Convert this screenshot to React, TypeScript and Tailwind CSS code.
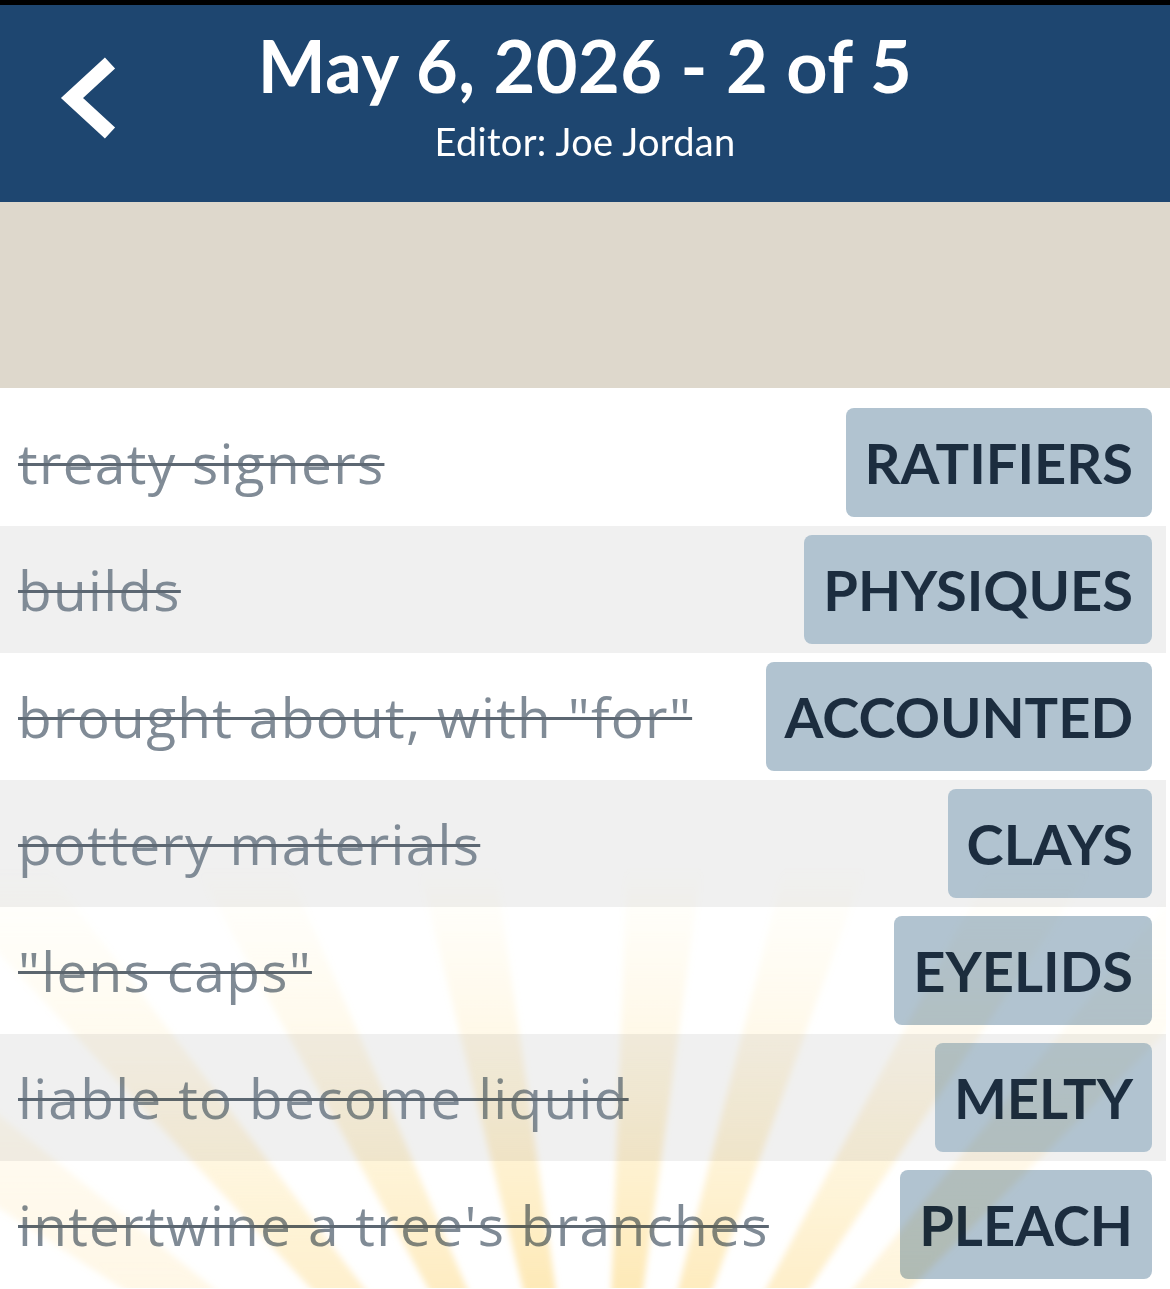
import React from 'react';

type Entry = { clue: string; answer: string };

const entries: Entry[] = [
  { clue: 'treaty signers', answer: 'RATIFIERS' },
  { clue: 'builds', answer: 'PHYSIQUES' },
  { clue: 'brought about, with "for"', answer: 'ACCOUNTED' },
  { clue: 'pottery materials', answer: 'CLAYS' },
  { clue: '"lens caps"', answer: 'EYELIDS' },
  { clue: 'liable to become liquid', answer: 'MELTY' },
  { clue: "intertwine a tree's branches", answer: 'PLEACH' },
];

// sun rays fanning out from below the list: [angle from vertical, strength]
const rays: [number, number][] = [
  [-54, 0.35],
  [-40, 0.7],
  [-26, 0.85],
  [-11, 1],
  [5, 1],
  [17, 0.9],
  [31, 0.75],
  [42, 0.5],
];

function Sunburst() {
  const cx = 600;
  const cy = 1212;
  const len = 1600;
  const half = 2.9;
  return (
    <svg className="pointer-events-none absolute inset-0 h-full w-full mix-blend-multiply" viewBox="0 0 1166 900" preserveAspectRatio="none">
      <defs>
        <linearGradient id="rayFade" gradientUnits="userSpaceOnUse" x1="0" y1="480" x2="0" y2="900">
          <stop offset="0" stopColor="#fde7a8" stopOpacity="0" />
          <stop offset="0.45" stopColor="#fde7a8" stopOpacity="0.3" />
          <stop offset="1" stopColor="#fde2a0" stopOpacity="0.75" />
        </linearGradient>
        <filter id="raySoft" x="-10%" y="-10%" width="120%" height="120%">
          <feGaussianBlur stdDeviation="3" />
        </filter>
      </defs>
      <g filter="url(#raySoft)">
        {rays.map(([a, k]) => {
          const r1 = ((a - half) * Math.PI) / 180;
          const r2 = ((a + half) * Math.PI) / 180;
          const p1 = `${cx + Math.sin(r1) * len},${cy - Math.cos(r1) * len}`;
          const p2 = `${cx + Math.sin(r2) * len},${cy - Math.cos(r2) * len}`;
          return <polygon key={a} points={`${cx},${cy} ${p1} ${p2}`} fill="url(#rayFade)" opacity={k} />;
        })}
      </g>
    </svg>
  );
}

export default function App() {
  return (
    <div className="min-h-[1289px] bg-white font-['Lato','Open_Sans',sans-serif]">
      <header className="border-t-[5px] border-black bg-[#1e4670]">
        <div className="relative flex h-[197px] flex-col items-center text-white">
          <button className="absolute left-[58px] top-[48px] h-[90px] w-[64px]" aria-label="Back">
            <svg viewBox="0 0 64 90" className="h-full w-full">
              <polyline points="52,10 14,45 52,80" fill="none" stroke="white" strokeWidth="15" strokeLinejoin="miter" />
            </svg>
          </button>
          <h1 className="mt-[17px] text-[72px] font-bold leading-[86px] tracking-[0.5px]">May 6, 2026 - 2 of 5</h1>
          <p className="mt-[10px] text-[38px] leading-[46px] tracking-[0.3px]">Editor: Joe Jordan</p>
        </div>
      </header>

      <div className="h-[186px] bg-[#ded8cc]" />

      <div className="relative mr-[4px] pt-[11px]">
        {entries.map((e, i) => (
          <div
            key={e.answer}
            className={`flex h-[127px] items-center justify-between pl-[18px] pr-[14px] ${i % 2 === 1 ? 'bg-[#f0f0f0]' : 'bg-white'}`}
          >
            <span className="font-['Open_Sans',sans-serif] text-[55px] leading-none tracking-[1.3px] text-[#808b96] line-through decoration-[#5c6772] decoration-[3px]">
              {e.clue}
            </span>
            <span className="flex h-[109px] items-center rounded-[8px] bg-[#b1c3d0] px-[19px] text-[56px] font-bold leading-none text-[#1c2d3f]">
              {e.answer}
            </span>
          </div>
        ))}
        <Sunburst />
      </div>
    </div>
  );
}
